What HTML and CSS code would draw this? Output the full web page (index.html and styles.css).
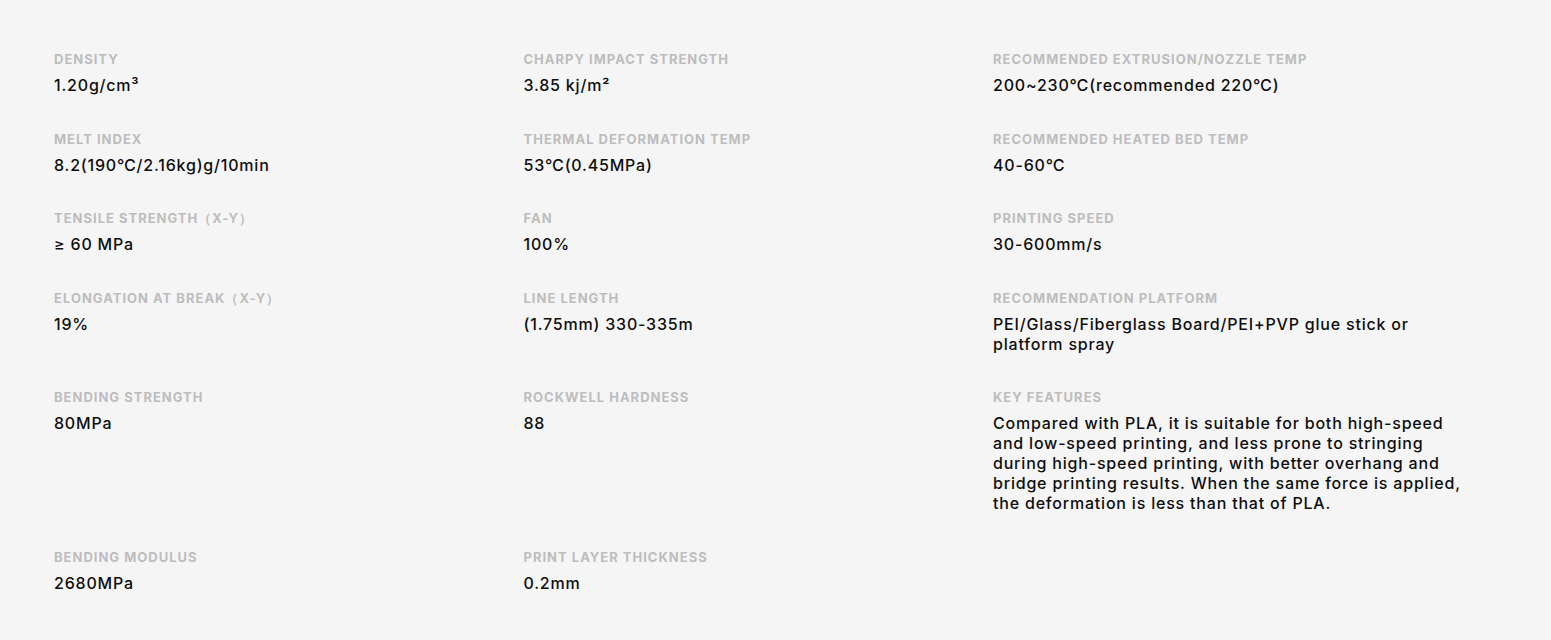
FILE: index.html
```html
<!DOCTYPE html>
<html lang="en">
<head>
<meta charset="utf-8">
<title>Specifications</title>
<link rel="stylesheet" href="styles.css">
</head>
<body>
<section class="specs">
  <div class="spec"><div class="label">Density</div><div class="value">1.20g/cm³</div></div>
  <div class="spec"><div class="label">Charpy impact strength</div><div class="value">3.85 kj/m²</div></div>
  <div class="spec"><div class="label">Recommended extrusion/nozzle temp</div><div class="value">200~230℃(recommended 220℃)</div></div>

  <div class="spec"><div class="label">Melt index</div><div class="value">8.2(190℃/2.16kg)g/10min</div></div>
  <div class="spec"><div class="label">Thermal deformation temp</div><div class="value">53℃(0.45MPa)</div></div>
  <div class="spec"><div class="label">Recommended heated bed temp</div><div class="value">40-60℃</div></div>

  <div class="spec"><div class="label">Tensile strength（X-Y）</div><div class="value">≥ 60 MPa</div></div>
  <div class="spec"><div class="label">Fan</div><div class="value">100%</div></div>
  <div class="spec"><div class="label">Printing speed</div><div class="value">30-600mm/s</div></div>

  <div class="spec"><div class="label">Elongation at break（X-Y）</div><div class="value">19%</div></div>
  <div class="spec"><div class="label">Line length</div><div class="value">(1.75mm) 330-335m</div></div>
  <div class="spec"><div class="label">Recommendation platform</div><div class="value">PEI/Glass/Fiberglass Board/PEI+PVP glue stick or platform spray</div></div>

  <div class="spec"><div class="label">Bending strength</div><div class="value">80MPa</div></div>
  <div class="spec"><div class="label">Rockwell hardness</div><div class="value">88</div></div>
  <div class="spec"><div class="label">Key features</div><div class="value">Compared with PLA, it is suitable for both high-speed and low-speed printing, and less prone to stringing during high-speed printing, with better overhang and bridge printing results. When the same force is applied, the deformation is less than that of PLA.</div></div>

  <div class="spec"><div class="label">Bending modulus</div><div class="value">2680MPa</div></div>
  <div class="spec"><div class="label">Print layer thickness</div><div class="value">0.2mm</div></div>
</section>
</body>
</html>
```

FILE: styles.css
```css
html, body {
  margin: 0;
  padding: 0;
  background: #f5f5f5;
}
body {
  font-family: "Inter", "Noto Sans", "Liberation Sans", sans-serif;
  color: #111;
}
.specs {
  display: grid;
  grid-template-columns: repeat(3, 469.5px);
  row-gap: 34.5px;
  padding: 50px 0 0 54px;
}
.label {
  font-size: 13px;
  line-height: 18px;
  font-weight: 700;
  letter-spacing: 1px;
  text-transform: uppercase;
  color: #bdbdbd;
}
.value {
  margin-top: 7px;
  font-size: 16px;
  line-height: 20px;
  font-weight: 500;
  letter-spacing: 0.8px;
  color: #0d0d0d;
}
```
